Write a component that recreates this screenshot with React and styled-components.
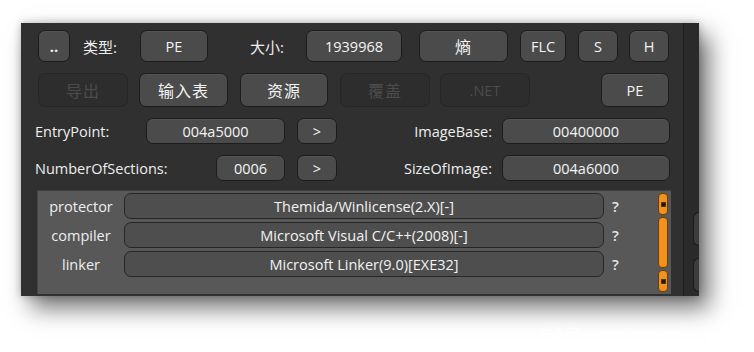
import React from "react";
import styled, { createGlobalStyle } from "styled-components";

const Global = createGlobalStyle`
  html, body {
    margin: 0;
    padding: 0;
    background: #ffffff;
    font-family: "Open Sans", "Noto Sans CJK SC", sans-serif;
  }
`;

const Page = styled.div`
  position: relative;
  width: 754px;
  height: 352px;
  padding: 23px 0 0 21px;
  box-sizing: border-box;
  overflow: hidden;
`;

const Window = styled.div`
  width: 678px;
  height: 273px;
  display: flex;
  background: #303030;
  box-shadow: 10px 12px 22px rgba(0, 0, 0, 0.55), 0 0 8px rgba(0, 0, 0, 0.25);
`;

const Main = styled.div`
  width: 662px;
  box-sizing: border-box;
  padding: 7px 12px 0 16px;
  display: flex;
  flex-direction: column;
`;

const Side = styled.div`
  flex: 1;
  background: #2a2a2a;
  border-left: 1px solid #1f1f1f;
  display: flex;
  flex-direction: column;
  align-items: flex-end;
  padding-top: 189px;
  gap: 12px;
  overflow: hidden;
`;

const SideStub = styled.div`
  width: 5px;
  height: 32px;
  background: #3c3c3c;
  border: 1px solid #1c1c1c;
  border-right: none;
  border-radius: 6px 0 0 6px;
`;

const Row = styled.div`
  display: flex;
  align-items: center;
  height: ${(p) => p.$h}px;
  margin-top: ${(p) => p.$mt || 0}px;
`;

const Btn = styled.div`
  box-sizing: border-box;
  flex: none;
  width: ${(p) => p.$w}px;
  height: 100%;
  margin-left: ${(p) => (p.$auto ? "auto" : `${p.$ml || 0}px`)};
  display: flex;
  align-items: center;
  justify-content: center;
  border-radius: 7px;
  border: 1px solid ${(p) => (p.$off ? "#262626" : "#1c1c1c")};
  background: ${(p) => (p.$off ? "#2d2d2d" : "#4b4b4b")};
  color: ${(p) => (p.$off ? "#4c4c4c" : "#f4f4f4")};
  font-size: ${(p) => (p.$cjk ? 16 : 14.5)}px;
  font-weight: ${(p) => (p.$bold ? 700 : 400)};
  letter-spacing: ${(p) => (p.$cjk ? "1px" : "0")};
  box-shadow: ${(p) => (p.$off ? "none" : "inset 0 1px 0 rgba(255,255,255,0.06)")};
`;

const Label = styled.span`
  flex: none;
  box-sizing: border-box;
  margin-left: ${(p) => p.$ml || 0}px;
  width: ${(p) => (p.$w ? `${p.$w}px` : "auto")};
  text-align: ${(p) => p.$align || "left"};
  color: #eeeeee;
  font-size: ${(p) => (p.$cjk ? 15 : 14.5)}px;
  white-space: nowrap;
`;

const Inner = styled.div`
  margin-top: 9px;
  height: 104px;
  background: #585858;
  border-top: 1px solid #3e3e3e;
  border-left: 1px solid #454545;
  box-sizing: border-box;
  display: flex;
  padding: 2px 3px 0 0;
`;

const List = styled.div`
  flex: 1;
  display: flex;
  flex-direction: column;
  gap: 3px;
`;

const InfoRow = styled.div`
  display: flex;
  align-items: center;
  height: 26px;
`;

const InfoName = styled.span`
  width: 86px;
  text-align: center;
  color: #eeeeee;
  font-size: 14.5px;
`;

const InfoField = styled.div`
  box-sizing: border-box;
  width: 480px;
  height: 100%;
  display: flex;
  align-items: center;
  justify-content: center;
  background: #4e4e4e;
  border: 1px solid #262626;
  border-radius: 7px;
  color: #f2f2f2;
  font-size: 14.5px;
`;

const Ask = styled.span`
  margin-left: 8px;
  color: #e6e6e6;
  font-size: 15px;
  font-weight: 600;
`;

const Scroll = styled.div`
  width: 10px;
  display: flex;
  flex-direction: column;
  gap: 2px;
  padding-bottom: 2px;
`;

const ScrollPart = styled.div`
  box-sizing: border-box;
  height: ${(p) => (p.$grow ? "auto" : `${p.$h}px`)};
  flex: ${(p) => (p.$grow ? 1 : "none")};
  background: #f0921c;
  border: 1px solid #6d3b05;
  border-radius: 4px;
  display: flex;
  align-items: center;
  justify-content: center;
`;

const Dot = styled.div`
  width: 3px;
  height: 3px;
  background: #1a1a1a;
  border: 1px solid #5a3000;
`;

const Watermark = styled.div`
  position: absolute;
  left: 538px;
  top: 323px;
  color: #ffffff;
  font-size: 14px;
  font-family: "Noto Sans CJK SC", "Open Sans", sans-serif;
  white-space: nowrap;
`;

const infos = [
  ["protector", "Themida/Winlicense(2.X)[-]"],
  ["compiler", "Microsoft Visual C/C++(2008)[-]"],
  ["linker", "Microsoft Linker(9.0)[EXE32]"],
];

export default function App() {
  return (
    <>
      <Global />
      <Page>
        <Window>
          <Main>
            <Row $h={32}>
              <Btn $w={32} $ml={1} $bold>..</Btn>
              <Label $cjk $ml={13} $w={57}>类型:</Label>
              <Btn $w={68}>PE</Btn>
              <Label $cjk $ml={42} $w={56}>大小:</Label>
              <Btn $w={96}>1939968</Btn>
              <Btn $w={89} $ml={17} $cjk>熵</Btn>
              <Btn $w={46} $ml={12}>FLC</Btn>
              <Btn $w={40} $ml={12}>S</Btn>
              <Btn $w={40} $ml={11}>H</Btn>
            </Row>
            <Row $h={34} $mt={11}>
              <Btn $w={90} $ml={1} $cjk $off>导出</Btn>
              <Btn $w={89} $ml={11} $cjk>输入表</Btn>
              <Btn $w={88} $ml={12} $cjk>资源</Btn>
              <Btn $w={90} $ml={12} $cjk $off>覆盖</Btn>
              <Btn $w={90} $ml={10} $off>.NET</Btn>
              <Btn $w={68} $auto>PE</Btn>
              <span style={{ width: 2 }} />
            </Row>
            <Row $h={26} $mt={11}>
              <Label $ml={-2} $w={111}>EntryPoint:</Label>
              <Btn $w={139}>004a5000</Btn>
              <Btn $w={40} $ml={12}>&gt;</Btn>
              <Label $w={155} $align="right">ImageBase:</Label>
              <Btn $w={168} $ml={10}>00400000</Btn>
            </Row>
            <Row $h={26} $mt={11}>
              <Label $ml={-2} $w={181}>NumberOfSections:</Label>
              <Btn $w={69}>0006</Btn>
              <Btn $w={40} $ml={12}>&gt;</Btn>
              <Label $w={155} $align="right">SizeOfImage:</Label>
              <Btn $w={168} $ml={10}>004a6000</Btn>
            </Row>
            <Inner>
              <List>
                {infos.map(([name, value]) => (
                  <InfoRow key={name}>
                    <InfoName>{name}</InfoName>
                    <InfoField>{value}</InfoField>
                    <Ask>?</Ask>
                  </InfoRow>
                ))}
              </List>
              <Scroll>
                <ScrollPart $h={22}><Dot /></ScrollPart>
                <ScrollPart $grow />
                <ScrollPart $h={22}><Dot /></ScrollPart>
              </Scroll>
            </Inner>
          </Main>
          <Side>
            <SideStub />
            <SideStub />
          </Side>
        </Window>
        <Watermark>安全客（www.anquanke.com）</Watermark>
      </Page>
    </>
  );
}
